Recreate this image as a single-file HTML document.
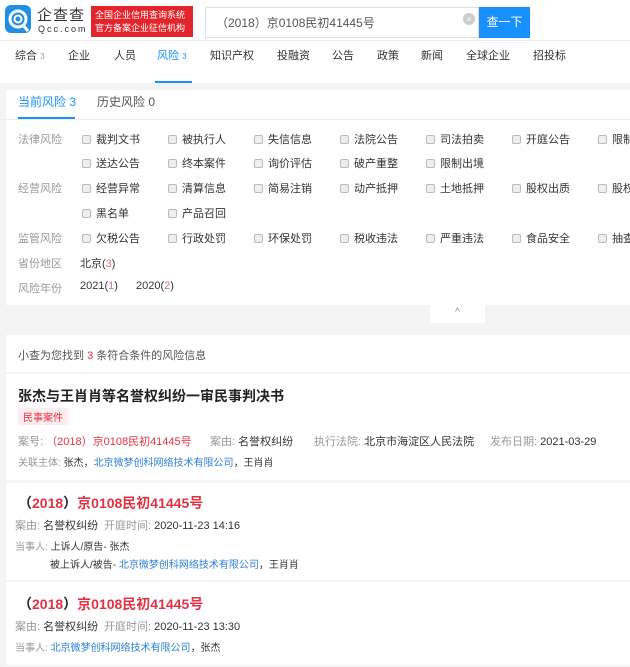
<!DOCTYPE html><html><head><meta charset="utf-8"><style>
*{margin:0;padding:0;box-sizing:border-box}
body{width:630px;height:667px;overflow:hidden;background:#f4f4f4;font-family:"Liberation Sans","Noto Sans CJK SC",sans-serif;font-size:11px;color:#333;position:relative}
.a{position:absolute;white-space:nowrap}
.g{color:#999}.r{color:#e33244}.b{color:#2a7fd4}
.cb{display:inline-block;width:9px;height:9px;border:1px solid #bbb;background:#eee;border-radius:2px;margin-right:5px;vertical-align:-1px}
</style></head><body>
<div class="a" style="left:0;top:0;width:630px;height:40px;background:#fff"></div>
<svg class="a" style="left:5px;top:5px" width="26" height="30" viewBox="0 0 26 30"><rect x="0" y="0" width="26" height="28" rx="6" fill="#1e8ee6"/><circle cx="13" cy="14" r="8" fill="none" stroke="#fff" stroke-width="3"/><circle cx="13" cy="14" r="3.5" fill="none" stroke="#fff" stroke-width="2"/><path d="M18 20 L23 26" stroke="#fff" stroke-width="3"/></svg>
<div class="a" style="left:37px;top:4px;font-size:15px;color:#333;letter-spacing:1px">企查查</div>
<div class="a" style="left:38px;top:24px;font-size:9px;color:#333;letter-spacing:2px">Qcc.com</div>
<div class="a" style="left:91px;top:6px;width:102px;height:31px;background:#e3242b;color:#fff;font-size:9px;line-height:13px;padding:3px 4px">全国企业信用查询系统<br>官方备案企业征信机构</div>
<div class="a" style="left:205px;top:7px;width:274px;height:31px;border:1px solid #e0e0e0;background:#fff"></div>
<div class="a" style="left:216px;top:14px;font-size:12px;color:#555">（2018）京0108民初41445号</div>
<div class="a" style="left:463px;top:13px;width:12px;height:12px;border-radius:50%;background:#ccc;color:#fff;font-size:9px;line-height:12px;text-align:center">×</div>
<div class="a" style="left:479px;top:7px;width:51px;height:31px;background:#1890ff;color:#fff;font-size:12px;line-height:31px;text-align:center">查一下</div>
<div class="a" style="left:0;top:40px;width:630px;height:43px;background:#fff;border-top:1px solid #eee"></div>
<div class="a" style="top:47px;font-size:11px;left:0;width:630px">
<span class="a" style="left:15px">综合 <small class="g" style="font-size:8px">3</small></span>
<span class="a" style="left:68px">企业</span><span class="a" style="left:114px">人员</span>
<span class="a" style="left:157px;color:#1890ff">风险 <small style="font-size:8px">3</small></span>
<span class="a" style="left:210px">知识产权</span><span class="a" style="left:277px">投融资</span>
<span class="a" style="left:332px">公告</span><span class="a" style="left:377px">政策</span>
<span class="a" style="left:421px">新闻</span><span class="a" style="left:466px">全球企业</span><span class="a" style="left:533px">招投标</span></div>
<div class="a" style="left:155px;top:81px;width:37px;height:2px;background:#1890ff"></div>
<div class="a" style="left:6px;top:90px;width:624px;height:215px;background:#fff"></div>
<div class="a" style="left:18px;top:93px;font-size:12px;color:#1890ff">当前风险 3</div>
<div class="a" style="left:97px;top:93px;font-size:12px;color:#555">历史风险 0</div>
<div class="a" style="left:18px;top:117px;width:57px;height:2px;background:#1890ff"></div>
<div class="a" style="left:0;top:119px;width:630px;height:1px;background:#eee"></div>
<div id="f"></div>
<div class="a" style="left:430px;top:305px;width:55px;height:18px;background:#fff;color:#888;font-size:10px;text-align:center;line-height:16px">^</div>
<div class="a" style="left:6px;top:335px;width:624px;height:37px;background:#fff"></div>
<div class="a" style="left:18px;top:347px;color:#555">小查为您找到 <span class="r">3</span> 条符合条件的风险信息</div>
<div class="a" style="left:6px;top:374px;width:624px;height:106px;background:#fff"></div>
<div class="a" style="left:18px;top:386px;font-size:14px;font-weight:bold;color:#222">张杰与王肖肖等名誉权纠纷一审民事判决书</div>
<div class="a" style="left:18px;top:408px;padding:1px 5px;background:#fdecee;color:#e33244;font-size:10px">民事案件</div>
<div class="a" style="left:18px;top:433px"><span class="g">案号: </span><span class="r">（2018）京0108民初41445号</span></div>
<div class="a" style="left:210px;top:433px"><span class="g">案由: </span>名誉权纠纷</div>
<div class="a" style="left:314px;top:433px"><span class="g">执行法院: </span>北京市海淀区人民法院</div>
<div class="a" style="left:490px;top:433px"><span class="g">发布日期: </span>2021-03-29</div>
<div class="a" style="left:18px;top:454px;font-size:10px"><span class="g">关联主体: </span> 张杰，<span class="b">北京微梦创科网络技术有限公司</span>，王肖肖</div>
<div class="a" style="left:6px;top:483px;width:624px;height:97px;background:#fff"></div>
<div class="a" style="left:18px;top:493px;font-size:14px;font-weight:bold" ><span style="color:#222">（</span><span class="r">2018</span><span style="color:#222">）</span><span class="r">京0108民初41445号</span></div>
<div class="a" style="left:15px;top:517px"><span class="g">案由: </span> 名誉权纠纷</div>
<div class="a" style="left:104px;top:517px"><span class="g">开庭时间: </span> 2020-11-23 14:16</div>
<div class="a" style="left:15px;top:538px;font-size:10px"><span class="g">当事人: </span> 上诉人/原告- 张杰</div>
<div class="a" style="left:50px;top:556px;font-size:10px">被上诉人/被告- <span class="b">北京微梦创科网络技术有限公司</span>，王肖肖</div>
<div class="a" style="left:6px;top:582px;width:624px;height:83px;background:#fff"></div>
<div class="a" style="left:18px;top:594px;font-size:14px;font-weight:bold" ><span style="color:#222">（</span><span class="r">2018</span><span style="color:#222">）</span><span class="r">京0108民初41445号</span></div>
<div class="a" style="left:15px;top:618px"><span class="g">案由: </span> 名誉权纠纷</div>
<div class="a" style="left:104px;top:618px"><span class="g">开庭时间: </span> 2020-11-23 13:30</div>
<div class="a" style="left:15px;top:639px;font-size:10px"><span class="g">当事人: </span> <span class="b">北京微梦创科网络技术有限公司</span>，张杰</div>
<script>
var rows=[[131,"法律风险",["裁判文书","被执行人","失信信息","法院公告","司法拍卖","开庭公告","限制"]],[155,"",["送达公告","终本案件","询价评估","破产重整","限制出境"]],[180,"经营风险",["经营异常","清算信息","简易注销","动产抵押","土地抵押","股权出质","股权"]],[205,"",["黑名单","产品召回"]],[230,"监管风险",["欠税公告","行政处罚","环保处罚","税收违法","严重违法","食品安全","抽查"]]];
var h="";rows.forEach(function(r){if(r[1])h+='<div class="a g" style="left:18px;top:'+r[0]+'px">'+r[1]+'</div>';r[2].forEach(function(t,i){h+='<div class="a" style="left:'+(82+i*86)+'px;top:'+r[0]+'px"><span class="cb"></span>'+t+'</div>'})});
h+='<div class="a g" style="left:18px;top:255px">省份地区</div><div class="a" style="left:80px;top:255px">北京(<span style="color:#c77">3</span>)</div>';
h+='<div class="a g" style="left:18px;top:280px">风险年份</div><div class="a" style="left:80px;top:280px">2021(<span style="color:#c77">1</span>)</div><div class="a" style="left:136px;top:280px">2020(<span style="color:#c77">2</span>)</div>';
document.getElementById("f").innerHTML=h;
</script>
</body></html>
